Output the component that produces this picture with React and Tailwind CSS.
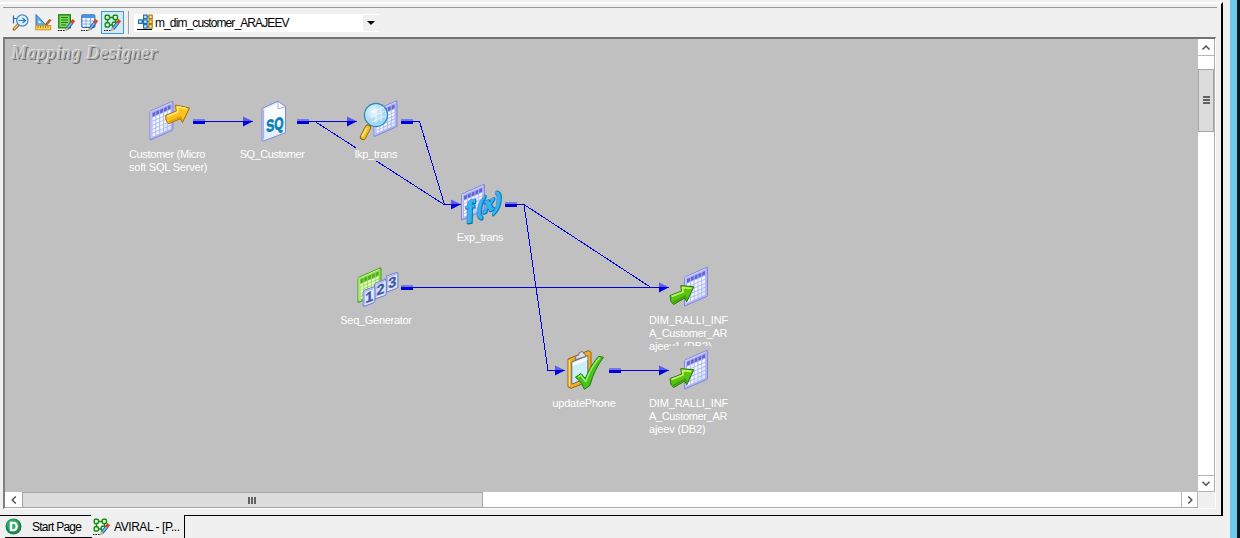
import React from "react";

const line = "#0000e0";

/* Perspective spreadsheet drawn as a skewed grid */
function Sheet({ x, y, w = 23, h = 29, green = false }) {
  const edge = green ? "#3f9c1c" : "#8086dc";
  const base = green ? "#8fdc4e" : "#b0b4f4";
  const head = green ? "#4fae22" : "#5f66cc";
  const cell = green ? "#f2ffd8" : "#f0f8ff";
  const cw = (w - 4) / 5;
  const ch = (h - 9) / 5;
  const cells = [];
  for (let r = 0; r < 5; r++)
    for (let c = 0; c < 5; c++)
      cells.push(
        <rect key={`${r}-${c}`} x={3 + c * cw} y={8 + r * ch} width={cw - 0.9} height={ch - 0.9} fill={r + c > 5 && !green ? "#dcebff" : cell} />
      );
  return (
    <g transform={`matrix(1 -0.44 0 1 ${x} ${y})`}>
      <rect x="0.5" y="0.5" width={w} height={h} rx="1.500" fill={base} stroke={edge} strokeWidth="1" />
      <path d={`M1.5 ${h - 1}V1.5H${w - 1}`} fill="none" stroke={green ? "#c9f59a" : "#d0d0ff"} />
      {[0, 1, 2, 3, 4].map((c) => (
        <rect key={c} x={3 + c * cw} y="3.3" width={cw - 0.9} height="3.8" fill={head} />
      ))}
      {cells}
    </g>
  );
}

function SourceIcon() {
  return (
    <svg width="42" height="42" viewBox="149 100 42 42">
      <Sheet x={149.5} y={111} />
      <path d="M166 115.300l10.300-4.300-.8-6 14 3-7 14.500-2.300-3.800-11.400 5q-4-3-2.800-8.400z" fill="#fbc21c" stroke="#a76c05" strokeWidth="1" />
      <path d="M167.500 116.300l10.300-4.300-.4-5.200 9.800 2" fill="none" stroke="#ffec83" strokeWidth="1.600" />
      <path d="M168.800 122l11.700-5.200 2.200 3.700" fill="none" stroke="#e99b0c" strokeWidth="1.600" />
    </svg>
  );
}

function QualifierIcon() {
  return (
    <svg width="42" height="42" viewBox="252 100 42 42">
      <path d="M261 108.500l16-7.300 7.500 5.300v26.200l-22 8.300-1.500-1z" fill="#e4f0ff" stroke="#7d88d8" />
      <path d="M262.200 109.500v30" stroke="#a9b0f0" strokeWidth="2" />
      <path d="M263.500 109.500l13.500-6.300v5.600l7-2v14l-20.500 9z" fill="#f8fcff" />
      <path d="M277 101.500v7.300l7.500-2z" fill="#fff" stroke="#8890d8" strokeWidth=".7" />
      <text transform="matrix(.88 -.2 0 1.250 265.300 132.300)" fontFamily="Liberation Sans" fontWeight="bold" fontSize="13.500" fill="#087dbb" stroke="#087dbb" strokeWidth=".6">SQ</text>
    </svg>
  );
}

function LookupIcon() {
  return (
    <svg width="42" height="42" viewBox="356 100 42 42">
      <defs>
        <radialGradient id="lens" cx=".4" cy=".35" r=".7">
          <stop offset="0" stopColor="#f2fdff" />
          <stop offset="1" stopColor="#79c6ee" />
        </radialGradient>
      </defs>
      <Sheet x={372.500} y={110.500} h={26} />
      <path d="M367 127.500l-5 9.500" stroke="#8c6508" strokeWidth="6.200" strokeLinecap="round" />
      <path d="M366.900 127.800l-4.800 9" stroke="#f2bd18" strokeWidth="4.600" strokeLinecap="round" />
      <path d="M365.900 127.600l-4.800 9" stroke="#fff0a0" strokeWidth="1.400" />
      <circle cx="375" cy="115" r="11.500" fill="url(#lens)" fillOpacity=".93" stroke="#2d86b7" strokeWidth="1.300" />
      <circle cx="375" cy="115" r="10.200" fill="none" stroke="#b9e8fc" strokeWidth="1" />
      <path d="M371 112l12-5M370 117l14-6M371 122l13-6M375 109v14M380 107v14" stroke="#fff" strokeOpacity=".6" strokeWidth="1.200" />
    </svg>
  );
}

function ExpressionIcon() {
  return (
    <svg className="overflow-visible" width="42" height="42" viewBox="461 183 42 42">
      <Sheet x={461} y={194} h={26} />
      <g fontFamily="Liberation Serif" fontWeight="bold" fontStyle="italic" strokeLinejoin="round">
        <g fill="#0a6eb0" stroke="#0a6eb0" strokeWidth="2.800">
          <text transform="translate(467.300 218) rotate(-8)" fontSize="24">f</text>
          <text transform="matrix(.95 -.36 0 1.080 477 216)" fontSize="22" textLength="26">(x)</text>
        </g>
        <g fill="#35b5f0" stroke="#35b5f0" strokeWidth="1.200">
          <text transform="translate(467 217.600) rotate(-8)" fontSize="24">f</text>
          <text transform="matrix(.95 -.36 0 1.080 476.700 215.600)" fontSize="22" textLength="26">(x)</text>
        </g>
      </g>
    </svg>
  );
}

function Tile({ x, y, n }) {
  return (
    <g transform={`matrix(1 -.36 0 1 ${x} ${y})`}>
      <rect x=".5" y=".5" width="11.800" height="16" rx="2" fill="#dce7ff" stroke="#6c7bd4" />
      <path d="M1.800 15V2H10.500" fill="none" stroke="#a8b4f4" strokeWidth="1.300" />
      <text x="2.600" y="13.800" fontFamily="Liberation Sans" fontWeight="bold" fontSize="14.500" fill="#40569f" stroke="#40569f" strokeWidth=".3">{n}</text>
    </g>
  );
}

function SequenceIcon() {
  return (
    <svg width="42" height="42" viewBox="357 266 42 42">
      <Sheet x={357.500} y={277.500} h={25} green />
      <Tile x={385.600} y={276} n="3" />
      <Tile x={374} y={283} n="2" />
      <Tile x={362.600} y={290.300} n="1" />
    </svg>
  );
}

function TargetIcon() {
  return (
    <svg width="42" height="42" viewBox="669 266 42 42">
      <Sheet x={684} y={277} />
      <path d="M670 295.500l11.500-4.300-.7-5.500 13 1-7 15-2.200-3.600-11 6.400-2.600-2.900z" fill="#58c514" stroke="#2b7208" />
      <path d="M671.500 296.400l11.500-4.400-.4-4.500 8.800.8" fill="none" stroke="#c6f35c" strokeWidth="1.800" />
      <path d="M673.200 302.700l11.800-6.600 2 2.900" fill="none" stroke="#3da00c" strokeWidth="1.500" />
    </svg>
  );
}

function UpdateIcon() {
  return (
    <svg width="42" height="42" viewBox="565 349 42 42">
      <path d="M568 359l20.500-8.300 2.500 1.300v28.500l-20 7.800-3-1.600z" fill="#f2ae25" stroke="#996207" />
      <path d="M569.300 360v26" stroke="#ffdc7b" strokeWidth="1.300" />
      <path d="M571.800 362l16-6.500v22l-16 6.700z" fill="#cbeefa" stroke="#4d6077" strokeWidth=".9" />
      <path d="M572.800 363l14.500-6v3l-14.500 6z" fill="#fff" />
      <path d="M575 359.800l1.300-4.300 2.300-.3.500-2.500 3.500-1.400.8 2 2 1v2.300z" fill="#dcdce4" stroke="#63636e" strokeWidth=".8" />
      <path d="M575.500 377.200l5.500-3.700 4.200 4.900c4-9 8.500-16.700 13.500-22.100l4.700 1c-6 8-10.600 17.500-13.500 28.200l-5.500 3.800c-2-5-5-9.200-8.900-12.100z" fill="#43c51d" stroke="#207b0a" />
      <path d="M578 377l2.600-1.600 5 6.100c3.800-10 8.400-18.300 14.400-24.200" fill="none" stroke="#a9ef6e" strokeWidth="1.400" />
    </svg>
  );
}

function Pencil() {
  return (
    <g>
      <path d="M9.500 14.200L14 8.500" stroke="#194f9b" strokeWidth="3.400" />
      <path d="M9.600 14L13.800 8.700" stroke="#68b6f4" strokeWidth="2" />
      <path d="M13.500 9l2.300-3" stroke="#d94322" strokeWidth="3.400" />
      <path d="M7.600 16.500l.6-3.300 2.600 2z" fill="#f8d9a0" stroke="#333" strokeWidth=".4" />
      <path d="M0 16.500h1.500M2.500 16.500h1.500M5 16.500h1.500" stroke="#000" />
    </g>
  );
}

function MappingGlyph() {
  return (
    <svg width="17" height="18" viewBox="0 0 17 18">
      <g fill="#d9ffc4" stroke="#148a14" strokeWidth="1.400">
        <path d="M3.500 5.500v4M11.500 5v3M5 3.500h5M5 11h4" />
        <rect x="1.200" y="1.200" width="4.300" height="4.300" rx="1.200" />
        <rect x="9.200" y="1.200" width="4.300" height="4.300" rx="1.200" />
        <rect x="1.200" y="8.700" width="4.300" height="4.300" rx="1.200" />
        <rect x="8.200" y="8.200" width="4" height="4" rx="1.200" />
      </g>
      <Pencil />
    </svg>
  );
}

function SourceAnalyzerGlyph() {
  return (
    <svg width="17" height="18" viewBox="0 0 17 18">
      <path d="M1.500 1.500v8M1 4.500h4" stroke="#2465b7" strokeWidth="1.200" fill="none" />
      <path d="M6.200 10.800L2.200 15" stroke="#9a6215" strokeWidth="3.200" strokeLinecap="round" />
      <path d="M6 10.800L2.300 14.700" stroke="#f1c47c" strokeWidth="1.600" strokeLinecap="round" />
      <circle cx="10.300" cy="6.500" r="5.600" fill="#d9f1ff" stroke="#4a8cc8" strokeWidth="1.300" />
      <path d="M6.500 6.500h7M10.500 4l3 2.500-3 2.500" stroke="#2f7ac6" strokeWidth="1.200" fill="none" />
    </svg>
  );
}

function TargetDesignerGlyph() {
  return (
    <svg width="17" height="18" viewBox="0 0 17 18">
      <path d="M1 .5l10.500 11H1z" fill="#5ca9e9" stroke="#2f78c0" />
      <path d="M3.500 6l3 3h-3z" fill="#fff" />
      <path d="M15.500 5.500L11 11" stroke="#b75f25" strokeWidth="2.600" />
      <rect x=".7" y="11.500" width="15" height="4.300" fill="#ffd34d" stroke="#c9962a" />
      <path d="M3 12v2M5.500 12v2M8 12v2M10.500 12v2M13 12v2" stroke="#8b6a20" strokeWidth=".8" />
    </svg>
  );
}

function TransformGlyph() {
  return (
    <svg width="17" height="18" viewBox="0 0 17 18">
      <rect x=".8" y=".8" width="11.500" height="13" fill="#7fdc5a" stroke="#16780d" strokeWidth="1.300" />
      <path d="M3 3.500h7M3 6h7M3 8.500h7M3 11h5" stroke="#157a10" strokeWidth="1.100" />
      <Pencil />
    </svg>
  );
}

function MappletGlyph() {
  return (
    <svg width="17" height="18" viewBox="0 0 17 18">
      <rect x=".8" y=".8" width="13" height="12.500" rx="1" fill="#fff" stroke="#316cb7" strokeWidth="1.200" />
      <rect x="1" y="1" width="12.500" height="3" fill="#4c91df" />
      <path d="M5 4v9M9.500 4v9M1 7h12.500M1 10h12.500" stroke="#79aee8" />
      <Pencil />
    </svg>
  );
}

function ComboGlyph() {
  return (
    <svg width="17" height="17" viewBox="0 0 17 17">
      <path d="M3 7.500h11M5 7.500L8 2.500h5M5 7.500l3 5h5" stroke="#2c6ea6" fill="none" />
      <g strokeWidth="1.200" fill="#c6ebff" stroke="#1b6fb0">
        <rect x="1.600" y="5.900" width="3.500" height="3.500" />
        <rect x="6.600" y="1.100" width="3.500" height="3.500" />
        <rect x="6.600" y="5.900" width="3.500" height="3.500" />
        <rect x="6.600" y="10.600" width="3.500" height="3.500" />
      </g>
      <g strokeWidth="1.200" fill="#ffec9d" stroke="#a67c16">
        <rect x="11.900" y="1.100" width="3.300" height="3.500" />
        <rect x="11.900" y="5.900" width="3.300" height="3.500" />
        <rect x="11.900" y="10.600" width="3.300" height="3.500" />
      </g>
      <path d="M0 15.500h15" stroke="#000" />
    </svg>
  );
}

const nodes = [
  { place: "left-[124px] top-[61px]", Icon: SourceIcon, label: ["Customer (Micro", "soft SQL Server)"], tracks: ["tracking-[-0.35px]", "tracking-[-0.2px]"] },
  { place: "left-[228px] top-[61px]", Icon: QualifierIcon, label: ["SQ_Customer"], center: true, tracks: ["tracking-[-0.45px]"] },
  { place: "left-[332px] top-[61px]", Icon: LookupIcon, label: ["lkp_trans"], center: true, tracks: ["tracking-[-0.25px]"] },
  { place: "left-[436px] top-[144px]", Icon: ExpressionIcon, label: ["Exp_trans"], center: true, tracks: ["tracking-[-0.35px]"] },
  { place: "left-[332px] top-[227px]", Icon: SequenceIcon, label: ["Seq_Generator"], center: true, tracks: ["tracking-[-0.3px]"] },
  { place: "left-[644px] top-[227px]", Icon: TargetIcon, label: ["DIM_RALLI_INF", "A_Customer_AR", "ajeev1 (DB2)"], tracks: ["tracking-[-0.12px]", "tracking-[-0.35px]", "tracking-[-0.15px]"] },
  { place: "left-[540px] top-[310px]", Icon: UpdateIcon, label: ["updatePhone"], center: true, tracks: ["tracking-[-0.2px]"] },
  { place: "left-[644px] top-[310px]", Icon: TargetIcon, label: ["DIM_RALLI_INF", "A_Customer_AR", "ajeev (DB2)"], tracks: ["tracking-[-0.12px]", "tracking-[-0.35px]", "tracking-[-0.15px]"] },
];

function Node({ place, Icon, label, center, tracks }) {
  return (
    <div className={`absolute flex w-[82px] flex-col items-center ${place}`}>
      <div className="-mt-[3px] h-[51px] bg-[#c0c0c0] pt-[3px]">
        <Icon />
      </div>
      <div className={`bg-[#c0c0c0] whitespace-pre text-[11px] leading-[13px] text-white ${center ? "-ml-[4px]" : "w-full"}`}>
        {label.map((t, i) => (
          <div key={t} className={tracks[i]}>{t}</div>
        ))}
      </div>
    </div>
  );
}

function Links() {
  const bars = [[193, 121], [297, 121], [401, 121], [505, 204], [401, 287], [609, 370]];
  const heads = [[243, 121], [347, 121], [451, 204], [659, 287], [555, 370], [659, 370]];
  return (
    <svg className="absolute inset-0" width="1193" height="453" viewBox="5 39 1193 453">
      <g fill="none" stroke={line} strokeWidth="1" shapeRendering="crispEdges">
        <path d="M193 121.500H253M297 121.500H357M315 121.500L444 204.500H461" />
        <path d="M401 121.500H419.500L444.500 204.500" />
        <path d="M505 204.500H524L651 287.500M524 204.500L548 370.500H565" />
        <path d="M401 287.500H669M609 370.500H669" />
      </g>
      {bars.map(([x, y]) => (
        <g key={`${x}-${y}`}>
          <rect x={x} y={y - 2} width="12" height="2" fill="#7678e6" />
          <rect x={x} y={y} width="12" height="3" fill="#0000d6" />
        </g>
      ))}
      {heads.map(([x, y]) => (
        <g key={`${x}-${y}`}>
          <path d={`M${x} ${y - 4.5}L${x + 10.5} ${y + 0.5}H${x}z`} fill="#5a5ce6" />
          <path d={`M${x} ${y}H${x + 10.5}L${x} ${y + 5.5}z`} fill="#0000e0" />
        </g>
      ))}
    </svg>
  );
}

function Chevron({ d }) {
  return (
    <svg width="10" height="10" viewBox="0 0 10 10">
      <path d={d} fill="none" stroke="#505050" strokeWidth="1.500" />
    </svg>
  );
}

function VerticalScroll() {
  return (
    <div className="flex h-[453px] w-[17px] flex-col border-r border-[#b0b0b0] bg-white">
      <div className="flex h-[17px] items-center justify-center border-b border-[#b4b4b4]">
        <Chevron d="M1.500 7.500L5 4l3.500 3.500" />
      </div>
      <div className="h-[13px]" />
      <div className="flex h-[63px] flex-col items-center justify-center gap-px border border-[#a6a6a6] bg-[#dcdcdc] pb-[2px]">
        <div className="h-[2px] w-[7px] bg-[#606060]" />
        <div className="h-[2px] w-[7px] bg-[#606060]" />
        <div className="h-[2px] w-[7px] bg-[#606060]" />
      </div>
      <div className="grow" />
      <div className="flex h-[17px] items-center justify-center border-y border-[#b4b4b4]">
        <Chevron d="M1.500 2.800L5 6.300l3.500-3.500" />
      </div>
    </div>
  );
}

function HorizontalScroll() {
  return (
    <div className="flex h-[17px] w-[1193px] border-b border-[#a6a6a6] bg-white">
      <div className="flex w-[17px] items-center justify-center">
        <Chevron d="M6.800 1.500L3.300 5l3.500 3.500" />
      </div>
      <div className="flex w-[461px] items-center justify-center gap-px border-x border-t border-[#a6a6a6] bg-[#dcdcdc] pr-[2px]">
        <div className="h-[7px] w-[2px] bg-[#606060]" />
        <div className="h-[7px] w-[2px] bg-[#606060]" />
        <div className="h-[7px] w-[2px] bg-[#606060]" />
      </div>
      <div className="grow" />
      <div className="flex w-[17px] items-center justify-center border-x border-[#b4b4b4]">
        <Chevron d="M3.300 1.500L6.800 5 3.300 8.500" />
      </div>
    </div>
  );
}

function Toolbar() {
  return (
    <div className="flex h-[29px] items-center pl-[9px]">
      <div className="flex w-[89px] gap-[6px]">
        <SourceAnalyzerGlyph />
        <TargetDesignerGlyph />
        <TransformGlyph />
        <MappletGlyph />
      </div>
      <div className="flex h-[23px] w-[23px] items-center justify-center border border-[#3c9bd8] bg-[#d4eafa]">
        <MappingGlyph />
      </div>
      <div className="ml-[4px] h-[23px] w-px bg-[#a0a0a0]" />
      <div className="ml-[5px] flex h-[18px] w-[245px] items-center bg-white pl-[3px]">
        <ComboGlyph />
        <span className="ml-px grow whitespace-nowrap text-[12px] leading-[16px] tracking-[-0.9px] text-black">m_dim_customer_ARAJEEV</span>
        <div className="flex h-[16px] w-[16px] items-center justify-center bg-[#f0f0f0]">
          <svg width="8" height="4" viewBox="0 0 8 4"><path d="M0 0h8L4 4z" /></svg>
        </div>
      </div>
    </div>
  );
}

function Tabs() {
  return (
    <div className="flex h-[22px] w-[1230px] text-[12px] leading-[22px] text-black">
      <div className="flex w-[92px] items-center pl-[5px]">
        <div className="flex h-full w-[87px] items-center border-b border-black">
          <svg width="17" height="17" viewBox="0 0 17 17">
            <circle cx="8.500" cy="8.500" r="8" fill="#188650" />
            <circle cx="8" cy="7" r="6" fill="#35a56c" />
            <text x="8.500" y="12.600" textAnchor="middle" fontSize="12" fontWeight="bold" fill="#fff" stroke="#fff" strokeWidth=".4" fontFamily="Liberation Sans">D</text>
          </svg>
          <span className="ml-[10px] whitespace-nowrap tracking-[-0.75px]">Start Page</span>
        </div>
      </div>
      <div className="flex w-[93px] items-center border-r-[1.5px] border-black pl-[1px]">
        <MappingGlyph />
        <span className="ml-[4px] whitespace-nowrap tracking-[-0.44px]">AVIRAL - [P...</span>
      </div>
    </div>
  );
}

export default function App() {
  return (
    <div className="flex h-[538px] w-[1240px] overflow-hidden bg-[#f0f0f0] font-['Liberation_Sans',Arial,sans-serif]">
      <div className="flex w-[1230px] flex-col">
        <div className="h-[2px]" />
        <div className="flex h-[513px] w-[1223px] flex-col border-r-2 border-t-2 border-r-black border-t-white pl-[3px] pt-[3px]">
          <div className="w-[1214px] border-t border-[#989898]">
            <Toolbar />
          </div>
          <div className="flex h-[472px] w-[1213px] flex-col border-l-2 border-t-2 border-b border-r border-l-[#808080] border-t-[#727272] border-b-white border-r-white">
            <div className="flex">
              <div className="relative h-[453px] w-[1193px] overflow-hidden bg-[#c0c0c0]">
                <div className="pl-[7px] pt-[3px] font-['Liberation_Serif',serif] text-[18px] italic leading-[22px] tracking-[0.66px] text-[#b4b4b4] [text-shadow:-1px_-1px_0_#e6e6e6,1px_1px_0_#686868]">
                  Mapping Designer
                </div>
                <Links />
                {nodes.map((n) => (
                  <Node key={n.place} {...n} />
                ))}
              </div>
              <VerticalScroll />
            </div>
            <HorizontalScroll />
          </div>
        </div>
        <div className="flex h-px w-[1223px]">
          <div className="w-[91px] bg-black" />
          <div className="w-[93px]" />
          <div className="grow bg-black" />
        </div>
        <Tabs />
      </div>
      <div className="w-[7px] bg-[#6dcaec]" />
      <div className="w-[3px] bg-[#04141c]" />
    </div>
  );
}
